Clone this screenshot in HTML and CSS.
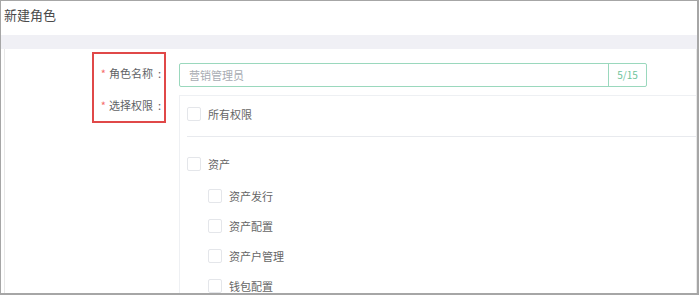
FILE: index.html
```html
<!DOCTYPE html>
<html lang="zh-CN">
<head>
    <meta charset="UTF-8">
    <title>新建角色</title>
    <link rel="stylesheet" href="styles.css">
</head>
<body>
    <div class="frame">
        <div class="page-title">新建角色</div>
        <div class="band"></div>
        <div class="panel">
            <div class="labels">
                <div class="label"><span class="req">*</span>角色名称<span class="colon">:</span></div>
                <div class="label"><span class="req">*</span>选择权限<span class="colon">:</span></div>
            </div>
            <div class="fields">
                <div class="name-input">
                    <div class="name-text">营销管理员</div>
                    <div class="name-count">5/15</div>
                </div>
                <div class="perms">
                    <div class="perm-row">
                        <span class="check"></span><span>所有权限</span>
                    </div>
                    <div class="divider"></div>
                    <div class="perm-row group">
                        <span class="check"></span><span>资产</span>
                    </div>
                    <div class="perm-row child">
                        <span class="check"></span><span>资产发行</span>
                    </div>
                    <div class="perm-row child">
                        <span class="check"></span><span>资产配置</span>
                    </div>
                    <div class="perm-row child">
                        <span class="check"></span><span>资产户管理</span>
                    </div>
                    <div class="perm-row child">
                        <span class="check"></span><span>钱包配置</span>
                    </div>
                </div>
            </div>
        </div>
    </div>
</body>
</html>
```

FILE: styles.css
```css
body {
    margin: 0;
    background: #fff;
    font-family: "Noto Sans CJK SC", "Noto Sans", sans-serif;
    color: #606266;
}

.frame {
    width: 699px;
    height: 295px;
    box-sizing: border-box;
    border-top: 1px solid #a6a6a6;
    border-left: 1px solid #a6a6a6;
    border-right: 2px solid #a6a6a6;
    border-bottom: 2px solid #a6a6a6;
    overflow: hidden;
    display: flex;
    flex-direction: column;
}

.page-title {
    flex-shrink: 0;
    height: 34px;
    padding-left: 3px;
    font-size: 13px;
    line-height: 27px;
    color: #4a4a4a;
}

.band {
    flex-shrink: 0;
    height: 14px;
    background-color: #f0f0f5;
}

.panel {
    flex-shrink: 0;
    margin-left: 3px;
    height: 260px;
    border-left: 1px solid #e8e8e8;
    border-right: 1px solid #e8e8e8;
    display: flex;
    align-items: flex-start;
    gap: 13px;
}

.labels {
    margin-left: 87px;
    margin-top: 3px;
    width: 74px;
    height: 71px;
    box-sizing: border-box;
    border: 2px solid #e04848;
    padding-top: 3px;
}

.label {
    height: 32px;
    line-height: 32px;
    font-size: 11px;
    text-align: right;
    padding-right: 3px;
    color: #606266;
    white-space: nowrap;
}

.req {
    color: #f56c6c;
    margin-right: 3px;
}

.colon {
    margin-left: 5px;
}

.fields {
    flex: 1;
    margin-top: 14px;
}

.name-input {
    width: 468px;
    height: 24px;
    box-sizing: border-box;
    border: 1px solid #9ad8bd;
    border-radius: 2px;
    display: flex;
    font-size: 11px;
    line-height: 22px;
}

.name-text {
    flex: 1;
    padding-left: 9px;
    color: #a8abb2;
}

.name-count {
    width: 37px;
    border-left: 1px solid #9ad8bd;
    text-align: center;
    font-size: 10px;
    color: #6cc39a;
}

.perms {
    margin-top: 8px;
    border-top: 1px solid #eef0f3;
    border-left: 1px solid #eef0f3;
    padding-left: 7px;
    font-size: 11px;
    color: #666;
}

.perm-row {
    height: 36px;
    display: flex;
    align-items: center;
    gap: 7px;
}

.perm-row.group {
    height: 34px;
    margin-top: 10px;
}

.perm-row.child {
    height: 30px;
    padding-left: 21px;
}

.divider {
    margin-top: 4px;
    height: 1px;
    background-color: #e8eaee;
}

.check {
    flex-shrink: 0;
    width: 14px;
    height: 14px;
    box-sizing: border-box;
    border: 1px solid #e4e6ea;
    border-radius: 2px;
    background: #fff;
}
```
